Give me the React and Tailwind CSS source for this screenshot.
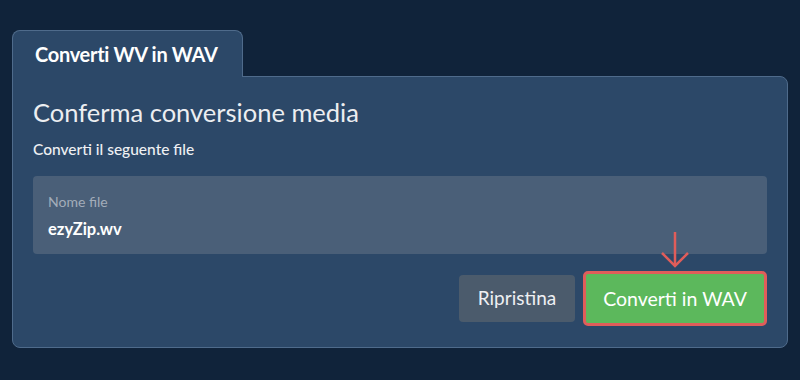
import React from 'react';

function App() {
  return (
    <div className="w-[800px] h-[380px] bg-[#10233a] pt-[30px] pl-[12px] font-['Lato','Noto_Sans',sans-serif] text-white">
      <div className="w-[776px] flex flex-col">
        {/* Tab */}
        <div className="relative z-10 -mb-px w-[231px] h-[47px] bg-[#2c4868] border border-b-0 border-[#4f6b8b] rounded-t-[8px] flex items-center pl-[22px]">
          <span className="text-[20px] font-bold tracking-[-0.3px]">Converti WV in WAV</span>
        </div>

        {/* Card */}
        <div className="bg-[#2c4868] border border-[#4f6b8b] rounded-b-[8px] rounded-tr-[8px] px-[20px] pt-[18px] pb-[21px]">
          <h2 className="text-[25.5px] leading-[34px] text-[#eceef1]">Conferma conversione media</h2>
          <p className="mt-[10px] text-[15.5px] leading-[20px] font-medium text-[#eef0f3]">Converti il seguente file</p>

          <div className="mt-[17px] h-[78px] bg-[#4a5f78] rounded-[4px] px-[15px] pt-[16px]">
            <div className="text-[14px] leading-[20px] text-[#a3adba]">Nome file</div>
            <div className="mt-[5px] text-[16.5px] leading-[24px] font-bold text-white">ezyZip.wv</div>
          </div>

          <div className="mt-[17px] flex items-center justify-end gap-[8px]">
            <button className="w-[116px] h-[47px] bg-[#4b5b6c] rounded-[4px] text-[19px] text-[#eef0f3]">Ripristina</button>
            <div className="relative">
              <svg className="absolute left-1/2 -translate-x-1/2 bottom-full mb-[3px]" width="30" height="36" viewBox="0 0 30 36" fill="none">
                <path d="M15 0 L15 34" stroke="#e05d5a" strokeWidth="2.5" />
                <path d="M2 21 L15 34 L28 21" stroke="#e05d5a" strokeWidth="2.5" />
              </svg>
              <button className="w-[184px] h-[55px] bg-[#5cb85c] border-[3px] border-[#e05d5a] rounded-[5px] text-[19.5px] text-white">Converti in WAV</button>
            </div>
          </div>
        </div>
      </div>
    </div>
  );
}

export default App;
